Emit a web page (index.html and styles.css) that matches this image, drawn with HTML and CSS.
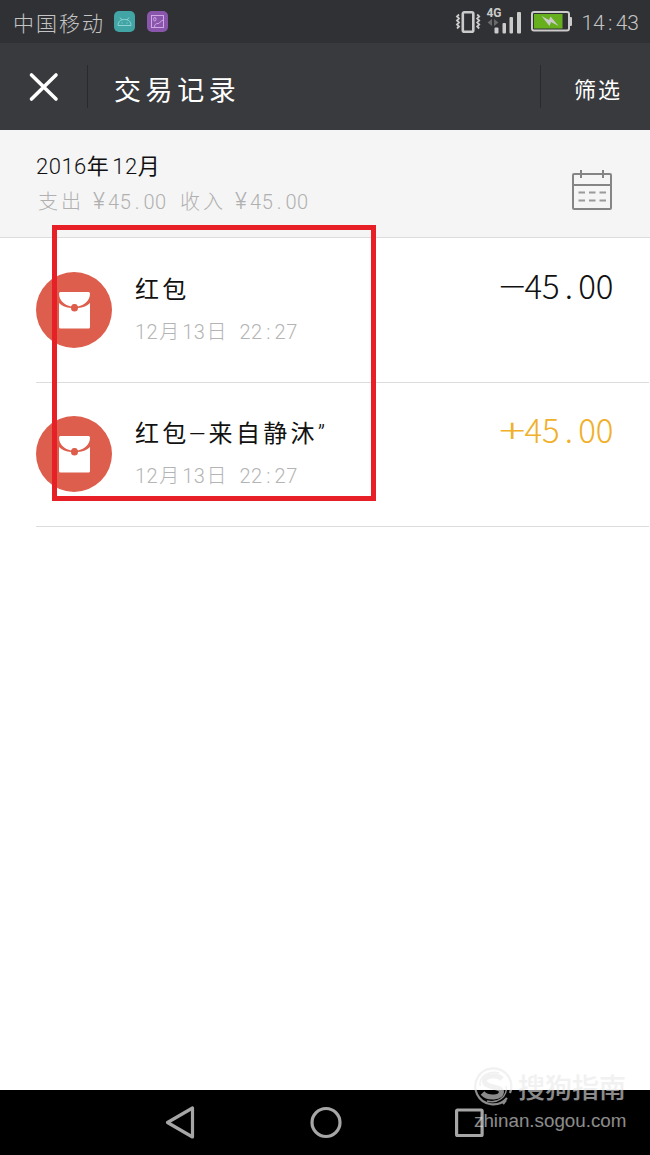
FILE: index.html
```html
<!DOCTYPE html>
<html lang="zh-CN">

<head>
    <meta charset="UTF-8">
    <meta name="viewport" content="width=device-width, initial-scale=1.0">
    <title>交易记录</title>
    <link rel="stylesheet" href="styles.css">
</head>

<body>
    <div class="phone">
        <div class="statusbar">
            <span class="carrier">中国移动</span>
            <svg class="app-icon" width="21" height="21" viewBox="0 0 21 21" fill="none" stroke="#8fd4d3">
                <rect width="21" height="21" rx="5" fill="#41a5a6" stroke="none"/>
                <path d="M4 14.500C4 10.500 6.500 8.500 10.500 8.500S17 10.500 17 14.500ZM6 6.500l2 2.500M15 6.500L13 9M7.500 12h1M12.500 12h1"/>
            </svg>
            <svg class="app-icon second" width="21" height="21" viewBox="0 0 21 21" fill="none" stroke="#cfa9e4">
                <rect width="21" height="21" rx="5" fill="#8a56ac" stroke="none"/>
                <rect x="4.500" y="4.500" width="12" height="12"/>
                <ellipse cx="7.800" cy="8.200" rx="1.200" ry="1.800"/>
                <path d="M7.500 16.500c0-3 1-4 3.500-4s2-3 5.500-3.500"/>
            </svg>
            <div class="status-right">
                <svg width="26" height="24" viewBox="0 0 26 24" fill="none" stroke="#cbcbcb">
                    <rect x="7.800" y="2.300" width="10.500" height="19.500" rx="1.500" stroke-width="2.600"/>
                    <path d="M4 4.500L2 6.500l2 2-2 2 2 2-2 2 2 2-2 2M22.200 4.500l2 2-2 2 2 2-2 2 2 2-2 2 2 2" stroke-width="1.800"/>
                </svg>
                <div class="signal">
                    <span class="net">4G</span>
                    <svg width="36" height="28" viewBox="0 0 36 28" fill="#cbcbcb">
                        <path d="M7 11v7l-4.500-3.500zM9 11v7l4.500-3.500z" fill="#68696b"/>
                        <rect x="9.500" y="19.500" width="4" height="6" rx="1"/>
                        <rect x="17.500" y="15" width="3.500" height="10.500" rx="1"/>
                        <rect x="24.500" y="9" width="3.500" height="16.500" rx="1"/>
                        <rect x="32" y="4" width="4" height="21.500" rx="1"/>
                    </svg>
                </div>
                <svg class="battery" width="41" height="21" viewBox="0 0 41 21">
                    <rect x="1" y="1" width="37" height="18.500" rx="2" fill="#303134" stroke="#cbcbcb" stroke-width="2"/>
                    <rect x="38" y="6" width="3" height="9" rx="1" fill="#cbcbcb"/>
                    <rect x="3" y="3" width="28.500" height="14.500" fill="#66b01e"/>
                    <path d="M10.500 5l7.500 4 1.500-3.500 8 9.500-7.500-4-1.500 4z" fill="#cbcbcb"/>
                </svg>
                <span class="clock">14<span class="dot">:</span>43</span>
            </div>
        </div>

        <div class="header">
            <svg class="close" width="31" height="30" viewBox="0 0 31 30" stroke="#fff" stroke-width="3.600" stroke-linecap="round">
                <path d="M3.500 3l24.500 24M28 3L3.500 27"/>
            </svg>
            <div class="line"></div>
            <h1>交易记录</h1>
            <div class="line right"></div>
            <span class="filter">筛选</span>
        </div>

        <div class="month">
            <div>
                <div class="month-title">2016<span class="zh">年</span>12<span class="zh">月</span></div>
                <div class="month-total">
                    <span class="zh">支出</span><span class="sum"><span class="yen">¥</span>45<span class="dot">.</span>00</span><span class="zh">收入</span><span class="sum"><span class="yen">¥</span>45<span class="dot">.</span>00</span>
                </div>
            </div>
            <svg class="calendar" width="42" height="42" viewBox="0 0 42 42" fill="none" stroke="#858585" stroke-width="2">
                <rect x="2" y="5" width="38" height="35" rx="1"/>
                <path d="M2 16h38M10 1v8M32 1v8"/>
                <path d="M7.500 23.500h6.500M18 23.500h6.500M28.500 23.500h6.500M7.500 31.500h6.500M18 31.500h6.500M28.500 31.500h6.500" stroke="#9a9a9a"/>
            </svg>
        </div>

        <div class="list">
            <div class="item">
                <svg class="packet" width="76" height="76" viewBox="0 0 76 76">
                    <circle cx="38" cy="38" r="38" fill="#dd5e4c"/>
                    <path d="M24.500 20h28q1.500 0 1.500 1.500C54 29 48 33 42 34.500a3.800 3.800 0 0 0-7 0C29 33 23 29 23 21.500q0-1.500 1.500-1.500z" fill="#fff"/>
                    <path d="M23 31c3 3 7 4.500 12 5a3.500 3.500 0 0 0 7 0c5-.500 9-2 12-5v24q0 1.500-1.500 1.500h-28q-1.500 0-1.500-1.500z" fill="#fff"/>
                    <circle cx="38.500" cy="35" r="3" fill="#dd5e4c"/>
                </svg>
                <div class="info">
                    <div class="name">红包</div>
                    <div class="date">12<span class="zh">月</span>13<span class="zh">日</span><span class="hour">22<span class="dot">:</span>27</span></div>
                </div>
                <div class="amount"><span class="sign">−</span>45<span class="dot">.</span>00</div>
            </div>
            <div class="item">
                <svg class="packet" width="76" height="76" viewBox="0 0 76 76">
                    <circle cx="38" cy="38" r="38" fill="#dd5e4c"/>
                    <path d="M24.500 20h28q1.500 0 1.500 1.500C54 29 48 33 42 34.500a3.800 3.800 0 0 0-7 0C29 33 23 29 23 21.500q0-1.500 1.500-1.500z" fill="#fff"/>
                    <path d="M23 31c3 3 7 4.500 12 5a3.500 3.500 0 0 0 7 0c5-.500 9-2 12-5v24q0 1.500-1.500 1.500h-28q-1.500 0-1.500-1.500z" fill="#fff"/>
                    <circle cx="38.500" cy="35" r="3" fill="#dd5e4c"/>
                </svg>
                <div class="info">
                    <div class="name">红包<span class="dash">–</span>来自静沐<span class="quote">”</span></div>
                    <div class="date">12<span class="zh">月</span>13<span class="zh">日</span><span class="hour">22<span class="dot">:</span>27</span></div>
                </div>
                <div class="amount plus"><span class="sign">+</span>45<span class="dot">.</span>00</div>
            </div>
        </div>

        <div class="navbar">
            <svg width="32" height="36" viewBox="0 0 32 36" fill="none" stroke="#a6a6a6" stroke-width="3.200" stroke-linejoin="round">
                <path d="M2.500 17.500L27.500 3v29z"/>
            </svg>
            <svg width="32" height="32" viewBox="0 0 32 32" fill="none" stroke="#a6a6a6" stroke-width="3.200">
                <circle cx="16" cy="15.500" r="14"/>
            </svg>
            <svg width="30" height="30" viewBox="0 0 30 30" fill="none" stroke="#a6a6a6" stroke-width="3.200">
                <rect x="1.600" y="2" width="25.500" height="25.500" rx="1"/>
            </svg>
        </div>

        <div class="mark-box"></div>

        <div class="watermark">
            <div class="brand">
                <svg width="40" height="40" viewBox="0 0 40 40" fill="none" stroke="#e8e8e8">
                    <path d="M34 31A18 18 0 1 1 37 26M33 33l-3 4" stroke-width="2.200"/>
                    <path d="M29 12C24 7 11 8 11.500 14.500S29 19 28.500 25 15 32 9.500 26" stroke-width="5"/>
                    <path d="M7 19c-1-10 9-16 19-13M33 19c2 11-9 18-19 15" stroke-width="1.500"/>
                </svg>
                <span>搜狗指南</span>
            </div>
            <div class="site">zhinan.sogou.com</div>
        </div>
    </div>
</body>

</html>
```
FILE: styles.css
```css
* {
    box-sizing: border-box;
}
body {
    margin: 0;
    font-family: Roboto, "Noto Sans CJK SC", sans-serif;
    font-weight: 300;
    background-color: white;
}
svg {
    display: block;
    flex: none;
}
.phone {
    position: relative;
    display: flex;
    flex-direction: column;
    width: 650px;
    height: 1155px;
    overflow: hidden;
    white-space: nowrap;
}
.dot {
    display: inline-block;
    text-align: center;
}

.statusbar {
    display: flex;
    align-items: center;
    height: 43px;
    padding: 0 11px 0 13px;
    background-color: #303134;
    color: #c4c4c4;
}
.carrier {
    width: 101px;
    font-size: 21px;
    letter-spacing: 2px;
}
.app-icon.second {
    margin-left: 12px;
}
.status-right {
    display: flex;
    align-items: center;
    margin-left: auto;
}
.signal {
    position: relative;
    margin-left: 4px;
}
.net {
    position: absolute;
    top: -1px;
    left: 1px;
    font-size: 12px;
    line-height: 12px;
    font-weight: bold;
    color: #cbcbcb;
}
.battery {
    margin-left: 10px;
}
.clock {
    margin-left: 9px;
    padding-top: 2px;
    font-size: 21px;
}
.clock .dot {
    width: 11px;
}

.header {
    display: flex;
    align-items: center;
    height: 87px;
    padding: 0 28px;
    background-color: #393a3e;
    color: white;
}
.line {
    width: 1px;
    height: 43px;
    margin: 0 26px 0 28px;
    background-color: #292a2d;
}
.line.right {
    margin: 0 33px 0 auto;
}
.header h1 {
    margin: 0;
    padding-top: 3px;
    font-size: 27px;
    font-weight: 400;
    letter-spacing: 4.6px;
}
.filter {
    width: 48px;
    padding-top: 2px;
    font-size: 22px;
    font-weight: 400;
    letter-spacing: 2px;
}

.month {
    display: flex;
    justify-content: space-between;
    height: 108px;
    padding: 23px 37px 0 36px;
    background-color: #f5f5f5;
    border-bottom: 1px solid #dcdcdc;
}
.month-title {
    font-size: 22px;
    line-height: 28px;
    letter-spacing: 0.5px;
    color: #111;
}
.month-title .zh {
    letter-spacing: 3.5px;
    font-weight: 400;
}
.month-total {
    display: flex;
    margin: 7px 0 0 2px;
    font-size: 20px;
    line-height: 28px;
    letter-spacing: 0.6px;
    color: #b0b0b0;
}
.month-total .zh {
    width: 55px;
    letter-spacing: 3px;
}
.month-total .sum {
    width: 87px;
}
.yen {
    display: inline-block;
    width: 15px;
    font-size: 23px;
    line-height: 20px;
}
.month-total .dot, .date .dot {
    width: 12px;
}
.calendar {
    margin-top: 16px;
}

.list {
    flex: 1;
    padding: 1px 1px 0 36px;
}
.item {
    display: flex;
    height: 144px;
    padding: 33px 36px 0 0;
    border-bottom: 1px solid #dcdcdc;
}
.info {
    margin-left: 23px;
}
.name {
    padding-top: 1px;
    font-size: 24px;
    font-weight: 400;
    line-height: 34px;
    letter-spacing: 3.3px;
    color: #111;
}
.dash, .quote {
    display: inline-block;
    width: 19px;
    font-weight: 300;
}
.dash {
    transform: scaleX(1.2);
}
.date {
    margin-top: 10px;
    font-size: 20px;
    line-height: 30px;
    letter-spacing: 0.5px;
    color: #b4b4b4;
}
.date .zh {
    margin-left: 1px;
    letter-spacing: 3px;
}
.hour {
    margin-left: 10px;
}
.amount {
    margin-left: auto;
    font-family: "Noto Sans CJK SC", sans-serif;
    font-size: 33px;
    line-height: 26px;
    letter-spacing: -0.3px;
    color: #111;
}
.amount.plus {
    color: #f0b029;
}
.sign {
    display: inline-block;
    width: 26px;
    transform: scaleX(1.5);
    transform-origin: left;
}
.amount .dot {
    width: 19px;
}

.navbar {
    display: flex;
    justify-content: space-between;
    align-items: center;
    height: 65px;
    padding: 0 165px;
    background-color: black;
}
.navbar svg {
    overflow: visible;
}

/* highlight over the records */
.mark-box {
    position: absolute;
    left: 52px;
    top: 225px;
    width: 324px;
    height: 276px;
    border: 5px solid #e71f27;
}

.watermark {
    position: absolute;
    left: 473px;
    top: 1066px;
    color: #e8e8e8;
    opacity: 0.6;
}
.brand {
    display: flex;
    align-items: center;
    height: 42px;
}
.brand span {
    margin-left: 5px;
    padding-bottom: 1px;
    font-size: 27px;
    font-weight: 500;
}
.site {
    margin: 2px 0 0 1px;
    font-family: "Liberation Sans", Arial, sans-serif;
    font-size: 18.8px;
    font-weight: 400;
    line-height: 22px;
}
```
